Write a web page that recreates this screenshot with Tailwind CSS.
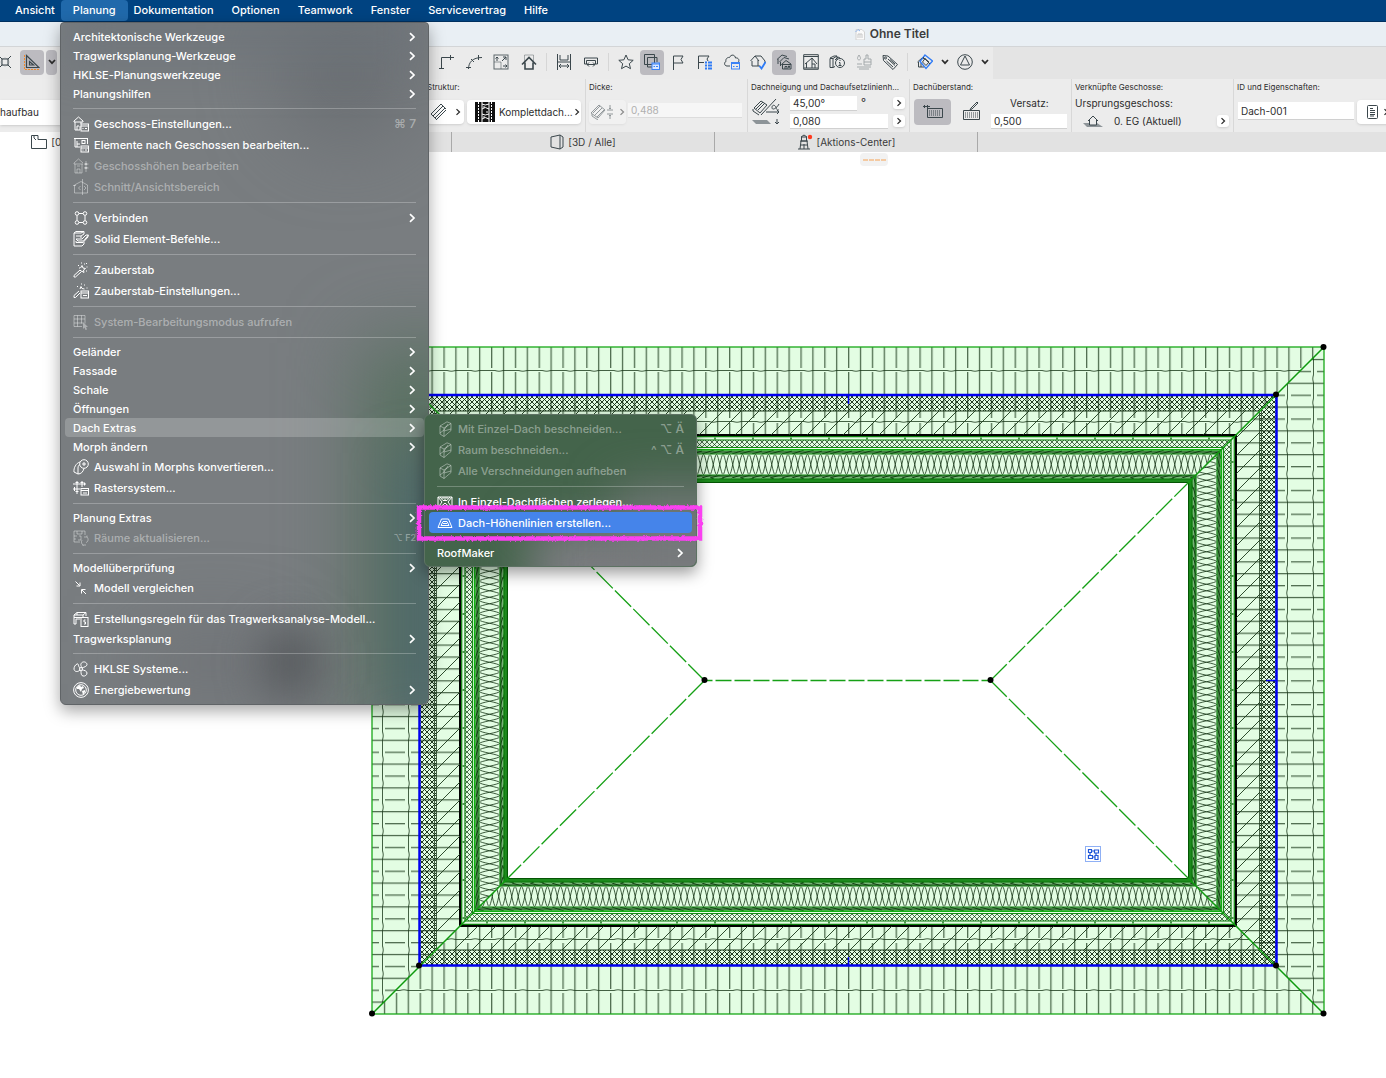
<!DOCTYPE html>
<html lang="de">
<head>
    <meta charset="UTF-8">
    <meta name="viewport" content="width=device-width, initial-scale=1.0">
    <title>Ohne Titel</title>
    <script src="https://cdn.jsdelivr.net/npm/@tailwindcss/browser@4"></script>
</head>
<body class="min-h-screen flex flex-col overflow-hidden bg-white font-['Inter','Liberation_Sans',sans-serif] text-[#2d2d2d]">

<!-- icon sprite -->
<svg class="hidden">
    <symbol id="chev" viewBox="0 0 8 10"><path d="M2 1.2 6 5 2 8.8" fill="none" stroke="currentColor" stroke-width="1.7"/></symbol>
    <symbol id="down" viewBox="0 0 10 8"><path d="M2 2 5 5.2 8 2" fill="none" stroke="currentColor" stroke-width="1.7"/></symbol>

    <!-- menu icons -->
    <symbol id="m-geschoss" viewBox="0 0 16 16"><path d="M1 5 5.500 1 10 5M1 5v1h9V5M2 6v8h5V10M4 14v-4h2M8 6v2" /><rect x="8" y="8" width="7.500" height="7"/><path d="M8 10h7M9.500 12.500h1M12 12.500h2"/></symbol>
    <symbol id="m-elemente" viewBox="0 0 16 16"><path d="M1 1.500h14M2 2v8h5M4 4v6M4 7h3M14.500 2v5"/><rect x="9" y="3.500" width="3" height="3"/><rect x="8" y="9" width="7.500" height="6"/><path d="M8 11h7M9.500 13h1M12 13h2"/></symbol>
    <symbol id="m-hoehen" viewBox="0 0 16 16"><path d="M1 5 5.500 1 10 5M1 5v1h9M2 6v9h7V6M4 15v-4h3v4M4 8h3M13 3v11M11 6h4.500M11 10h4.500M13 5l-1 1.500h2zM13 11l-1-1.500h2z"/></symbol>
    <symbol id="m-schnitt" viewBox="0 0 16 16"><path d="M1.500 14V6L8 2.500 14.500 6v8zM9.500 0v16M0 6.500h3M7.500 7l-2 2 2 2M11 7l2 2-2 2"/></symbol>
    <symbol id="m-verbinden" viewBox="0 0 16 16"><circle cx="4" cy="3.500" r="1.800"/><circle cx="12" cy="3.500" r="1.800"/><circle cx="4" cy="12.500" r="1.800"/><circle cx="12" cy="12.500" r="1.800"/><path d="M6 3.500h4M6 12.500h4M4 5.500v5M12 5.500v5"/></symbol>
    <symbol id="m-solid" viewBox="0 0 16 16"><path d="M1 2h7l3-1.500M1 2v13h8l2-2v-2M1 2l2-1.500h8V3M3 8h6l4-4h2.500l-5 6H5zM3 10v1.500h7l5-5.500V4M3 5h5l3-2M8 5v2"/></symbol>
    <symbol id="m-stab" viewBox="0 0 16 16"><path d="M1 13.500 7 8l1.500 1.500-6 5.500H1zM9 3.500l1 2.500 2.500.5-2 1.500.5 2.500-2.500-1.500M9 3.500 7.500 6"/><path d="M5 3.500h1M8 1h1M11 2h1M13.500 5h1M13 9h1M6 6h1M13 1.500h1"/></symbol>
    <symbol id="m-stabset" viewBox="0 0 16 16"><path d="M1 12.500 6 8M1 12.500v2h1.500L7 10M8 3.500l1 2 2.500.5M8 3.500 7 6M4 3.500h1M8 1h1M11 2h1M13.500 5h1"/><rect x="8" y="8" width="7.500" height="7"/><path d="M8 10h7M10 12.500h4"/></symbol>
    <symbol id="m-system" viewBox="0 0 16 16"><path d="M1 1.500h11v8M1 1.500v11h8M1 5h11M1 9h9M4.500 1.500v11M8.500 1.500v8"/><path d="m10 8 5 5h-2l1 2.500-1.500.5-1-2.500L10 15z" fill="currentColor" stroke="none"/></symbol>
    <symbol id="m-morph" viewBox="0 0 16 16"><circle cx="11" cy="5" r="4.300"/><path d="M11 3v4M9 5h4M7 3C3 4 .5 9 1 13l4 2V9c0-2 1-3 2-3.500M5 15c3 0 5-2 6-5.500"/></symbol>
    <symbol id="m-raster" viewBox="0 0 16 16"><path d="M4 1v13M9 1v6M0 4h13M0 9h7M2.500 2.500h3M7.500 2.500h3M2.500 11.500h3M1.500 7v4M11.500 2.500v3"/><rect x="8" y="8.500" width="7.500" height="6.500"/><path d="M8 10.500h7M10 13h4"/></symbol>
    <symbol id="m-raeume" viewBox="0 0 16 16"><path d="M7 12H1V1h11v4M4 1v3h5V1M1 6h3M1 9h2M6 6h2v4H5M14 7h-3M14 7c2 2 1 5-1 5.500M14 7v-1.500M10 15h3M10 15c-1.500-1-2-3-1-5M10 15v1"/></symbol>
    <symbol id="m-vergleich" viewBox="0 0 16 16"><path d="m2.500 1.500 4 4M7 2.500V6H3.500M13 14l-4-4M8.500 13.500V9.500h4" /></symbol>
    <symbol id="m-regeln" viewBox="0 0 16 16"><path d="M1 4h9v2M1 4l3-2.500h9V5M1 4v9h2V8h4M1 6.500h7M4 1.500v2.500M10 4l3-2.500"/><rect x="8" y="6.500" width="7" height="9"/><path d="M12.500 9h-1.500v2h1.500v2H11"/></symbol>
    <symbol id="m-hklse" viewBox="0 0 16 16"><circle cx="8" cy="8" r="1.500"/><path d="M7 7C5 6 6 2 4 3S1 6 1 8s3 4 6 1M9 7c-1-2-2-4 0-5.500s5 0 5 2S11 6 9 7M8 9.500c0 3 0 5 2 5.500s4-1 4-3-3-3-5-3"/></symbol>
    <symbol id="m-energie" viewBox="0 0 16 16"><circle cx="8" cy="8" r="7.400"/><circle cx="8" cy="8" r="5.300"/><path d="M4 5l3-2 1 2 2-1 1 2-2 1-1 3-2-3-2 0zM9 9l3-1v2l-2 3z" fill="currentColor" stroke="none"/></symbol>
    <symbol id="m-cut" viewBox="0 0 16 16"><path d="M3 5 10 .8l4 1.700v7L7 15.500 3 13zM3 5l4 2 7-4.500M7 7v8.500M3 12l4-3 4-6M7 10l7-2"/></symbol>
    <symbol id="m-zerlegen" viewBox="0 0 16 16"><path d="M1 3h14v10.500H1zM1 3l4 5-4 5.500M15 3l-4 5 4 5.500M3 3l3 3.500h4L13 3M6 3v2M8 3v3M10 3v2M3 13.500 8 9l5 4.500"/></symbol>
    <symbol id="m-linien" viewBox="0 0 16 16"><path d="M4.500 4h7L15 12.500H1zM4 10.500 6 6.500h4l2 4zM6 8.500h4"/></symbol>
</svg>

<!-- system menu bar -->
<nav class="h-[22px] shrink-0 flex items-center bg-[#004381] pl-[6px] text-[11px] font-medium text-white whitespace-nowrap border-b border-[#00305f]">
    <button class="h-full px-[9px]">Ansicht</button>
    <button class="h-full px-3 -mx-[3px] rounded bg-[#2069ab]">Planung</button>
    <button class="h-full px-[9px]">Dokumentation</button>
    <button class="h-full px-[9px]">Optionen</button>
    <button class="h-full px-[9px]">Teamwork</button>
    <button class="h-full px-[9px]">Fenster</button>
    <button class="h-full px-[9px]">Servicevertrag</button>
    <button class="h-full px-[9px]">Hilfe</button>
</nav>

<!-- window title -->
<header class="h-[25px] shrink-0 flex items-center justify-center gap-1 pl-[397px] bg-[#e9eff4] border-b border-[#d3d5d7] text-[12px] font-semibold text-[#3c3c3c]">
    <svg class="w-3 h-3" viewBox="0 0 12 12"><path d="M2 1.500h6l2.500 2.500v8H2z" fill="#fafafa" stroke="#d2d2d2"/><path d="M1.500 4 4 1.500 6 3" fill="none" stroke="#8fb4ec"/><path d="M4 10V6h4v4M6 6v4" fill="none" stroke="#c8c8c8"/></svg>
    <h1>Ohne Titel</h1>
</header>

<!-- toolbar -->
<div class="h-8 shrink-0 bg-[#e4e4e4]">
    <div class="h-full w-[993px] pb-[2px] flex items-center bg-[#ebebeb] [&_svg]:fill-none [&_svg]:stroke-[#3b474c]">
        <div class="w-[434px] flex items-center gap-[2px] shrink-0">
            <button aria-label="Raster" class="-ml-1 mr-[6px] w-4 h-6 flex items-center"><svg class="w-4 h-4" viewBox="0 0 16 16"><path d="M6 5h6v6H6zM6 5 3 2M12 5l3-3M6 11l-3 3M12 11l3 3"/><circle cx="9" cy="8" r="4" stroke-opacity=".3"/></svg></button>
            <button aria-label="Hilfslinien" class="w-6 h-[25px] rounded bg-[#bcbbc0] flex items-center justify-center"><svg class="w-4 h-4" viewBox="0 0 16 16"><path d="M2.500 1.500V13.500h12.500zM5.500 7.500v3.500h4z" stroke-width="1.200"/><path d="M.5 1v14.500H15" style="stroke:#f08a2c" stroke-dasharray="2 1"/></svg></button>
            <button aria-label="Hilfslinien Optionen" class="w-[11px] h-[25px] rounded bg-[#bcbbc0] flex items-center justify-center"><svg class="w-[10px] h-2 shrink-0"><use href="#down"/></svg></button>
        </div>
        <div class="w-[107px] flex justify-between shrink-0">
            <button aria-label="Ecke" class="w-6 h-6 flex items-center justify-center"><svg class="w-4 h-4" viewBox="0 0 16 16"><path d="M3.500 15V3.500H16M1 14.500h5M12.500 1v5"/></svg></button>
            <button aria-label="Bogen" class="w-6 h-6 flex items-center justify-center"><svg class="w-4 h-4" viewBox="0 0 16 16"><path d="M2.500 15C2.500 8 7 3.500 16 3.500M0 13.500h5M12.500 1v5M5 5l3 3"/></svg></button>
            <button aria-label="Skalieren" class="w-6 h-6 flex items-center justify-center"><svg class="w-4 h-4" viewBox="0 0 16 16"><rect x="1" y="1" width="14" height="14" stroke-opacity=".8"/><path d="M1 8h7v7" stroke-opacity=".5"/><path d="M4 3v4M2.500 4.500 4 3l1.500 1.500M10 12h4M12.500 10.500 14 12l-1.500 1.500M9 7l4-4M10 3h3v3"/></svg></button>
            <button aria-label="Haus" class="w-6 h-6 flex items-center justify-center"><svg class="w-4 h-4" viewBox="0 0 16 16"><path d="M3.500 8V1h9v7" stroke-opacity=".4"/><path d="M1 10.500 8 3.500l7 7M4 8.500V15h8V8.500" stroke-width="1.600"/></svg></button>
        </div>
        <div class="w-px h-[18px] mx-[5px] bg-[#d6d6d6]"></div>
        <div class="w-[51px] flex justify-between shrink-0">
            <button aria-label="Bemaßung" class="w-6 h-6 flex items-center justify-center"><svg class="w-4 h-4" viewBox="0 0 16 16"><path d="M1.500 0v16M14.500 0v16M4 1v5h8V1M1.500 8h13M3 12h10M5 10l-2 2 2 2M11 10l2 2-2 2"/></svg></button>
            <button aria-label="Abstand" class="w-6 h-6 flex items-center justify-center"><svg class="w-4 h-4" viewBox="0 0 16 16"><path d="M1.500 4h13v6h-2V6.500h-9V10h-2zM4 10.500h8M6 8.500l-2 2 2 2M10 8.500l2 2-2 2"/></svg></button>
        </div>
        <div class="w-px h-[18px] mx-[5px] bg-[#d6d6d6]"></div>
        <div class="w-[288px] flex justify-between shrink-0">
            <button aria-label="Favoriten" class="w-6 h-[25px] flex items-center justify-center"><svg class="w-4 h-4" viewBox="0 0 16 16"><path d="m8 1 2.100 4.800 5.100.5-3.900 3.400 1.200 5L8 12.100l-4.500 2.600 1.200-5L.8 6.300l5.100-.5z"/></svg></button>
            <button aria-label="Ebenen" class="w-6 h-[25px] rounded bg-[#bcbbc0] flex items-center justify-center"><svg class="w-4 h-4" viewBox="0 0 16 16"><path d="M.5.500h10v10H.5zM3.500 3.500H13V8M3.500 3.500V13H8"/><g style="stroke:#3b82f6"><rect x="8" y="9" width="7.500" height="6.500" fill="#dbe8ff"/><path d="M8 10h7.500M9.500 12.500h1.500M12 12.500h2"/></g></svg></button>
            <button aria-label="Marker" class="w-6 h-[25px] flex items-center justify-center"><svg class="w-4 h-4" viewBox="0 0 16 16"><path d="M2.500 16V2H12l-2 3.500L12 9H2.500"/></svg></button>
            <button aria-label="Marker-Liste" class="w-6 h-[25px] flex items-center justify-center"><svg class="w-4 h-4" viewBox="0 0 16 16"><path d="M1.500 15V2H12L10 5l1 2M1.500 8.500H7"/><path d="M8 8.500h2M11 8.500h4M8 11.500h2M11 11.500h4M8 14.500h2M11 14.500h4" style="stroke:#2f7bf6" stroke-width="2"/></svg></button>
            <button aria-label="Wolke" class="w-6 h-[25px] flex items-center justify-center"><svg class="w-4 h-4" viewBox="0 0 16 16"><path d="M6 12H3C0 12 0 8 2 7.500 1 4 5 3 5.500 3.500 7 0 11 .5 11.500 4c3-.5 4 2 3 4"/><g style="stroke:#3b82f6"><rect x="7.500" y="8.500" width="8" height="6.500"/><path d="M7.500 9.500h8M9 12.500h1.500M12 12.500h2"/></g></svg></button>
            <button aria-label="Prüfen" class="w-6 h-[25px] flex items-center justify-center"><svg class="w-4 h-4" viewBox="0 0 16 16"><path d="M.5 7 5 2l4 5M5 2h6l4 5v2M2 7v5h6V6M8 12h2"/><path d="m9.500 12 2 2.500L15.500 8" style="stroke:#2f7bf6" stroke-width="1.800"/></svg></button>
            <button aria-label="Geschosse" class="w-6 h-[25px] rounded bg-[#bcbbc0] flex items-center justify-center"><svg class="w-4 h-4" viewBox="0 0 16 16"><path d="M1 5.500 6 1l5 1.500M2 5v5M3.500 8 8 3.500 13 5M4.500 8v4M5.500 10.500 10 6.500l5 3.500v5H6.500v-5M5.500 10.500H15M9 15v-2.500h2V15M12.500 12h1v1.500h-1z"/></svg></button>
            <button aria-label="Ausschnitt" class="w-6 h-[25px] flex items-center justify-center"><svg class="w-4 h-4" viewBox="0 0 16 16"><path d="M.7.700h14.600v14.600H.7zM.7 2.500h14.600M2 10l7-6 5 6M3.500 9v5M9 4v10M9 10h3v4M1 14h14"/></svg></button>
            <button aria-label="Info" class="w-6 h-[25px] flex items-center justify-center"><svg class="w-4 h-4" viewBox="0 0 16 16"><path d="M1 4 5 2h3L4 4.500H1v9h3v-9M8 2v4M4 13.500 6 12.500"/><path d="M6 6 9 3l2 1"/><circle cx="11" cy="9" r="4.500"/><path d="M11 6v1M10 8.500h1v3M9.500 11.500h3"/></svg></button>
            <button aria-label="Farbe" class="w-6 h-[25px] flex items-center justify-center opacity-40"><svg class="w-4 h-4" viewBox="0 0 16 16"><path d="M3 1C1 4 1 5.500 3 6c2-.5 2-2 0-5zM8 7V5h2V1h2v4h3v6H8zM8 8h7M1 10h5M1 13h14M3 15h10"/></svg></button>
            <button aria-label="Etikett" class="w-6 h-[25px] flex items-center justify-center"><svg class="w-4 h-4" viewBox="0 0 16 16"><path d="M1 1.500 6 2l9.500 8.500-4.500 5L1.500 6.500zM6 5l7 6.500M4.500 7l6.500 6M8 5.500l5 4.500"/><circle cx="3.500" cy="4" r="1"/></svg></button>
        </div>
        <div class="w-px h-[18px] mx-[5px] bg-[#d6d6d6]"></div>
        <div class="flex items-center shrink-0">
            <button aria-label="Ansicht" class="w-6 h-6 flex items-center justify-center"><svg class="w-4 h-4" viewBox="0 0 16 16"><path d="M.5 8 5 4l3 1M1.500 8v5H7M4 13V9"/><path d="m8 1 7.500 6L9 14.500 3 7.500z" style="stroke:#2f7bf6" stroke-width="1.300"/><path d="m8 4.500 4 3.500-3 3.500L5.500 8zM6 3l7 7"/></svg></button>
            <button aria-label="Ansicht Optionen" class="w-4 h-6 flex items-center justify-center"><svg class="w-[10px] h-2"><use href="#down"/></svg></button>
            <button aria-label="Nordpfeil" class="w-6 h-6 flex items-center justify-center"><svg class="w-4 h-4" viewBox="0 0 16 16"><circle cx="8" cy="8" r="7.300"/><path d="m8 2 4.500 9h-9z"/></svg></button>
            <button aria-label="Nordpfeil Optionen" class="w-4 h-6 flex items-center justify-center"><svg class="w-[10px] h-2"><use href="#down"/></svg></button>
        </div>
    </div>
</div>

<!-- info box -->
<section class="h-[53px] shrink-0 flex bg-[#ececec] text-[11px] whitespace-nowrap overflow-hidden">
    <div class="w-[423px] shrink-0 pt-[21px]">
        <div class="h-[25px] bg-white shadow-sm flex items-center text-[10px]">haufbau</div>
    </div>
    <div class="w-[162px] shrink-0 pl-1">
        <p class="h-4 leading-4 text-[8px]">Struktur:</p>
        <div class="flex gap-[3px] pt-[5px]">
            <button aria-label="Struktur" class="w-[37px] h-6 rounded bg-white shadow-sm flex items-center justify-center gap-2"><svg class="w-4 h-4 fill-none stroke-[#3b474c]" viewBox="0 0 16 16"><path d="M0 10 10 0M2 12 12 2M4 14 14 4M6 15l9-9M0 10l6 6M10 0l5 5"/></svg><svg class="w-[6px] h-2"><use href="#chev"/></svg></button>
            <button class="w-[114px] h-6 rounded bg-white shadow-sm flex items-center gap-1 pl-2 text-[10px]"><svg class="w-[20px] h-5 shrink-0" viewBox="0 0 20 20"><path d="M0 0h20v20H0z" fill="#111"/><path d="M3.500 0v20M16.500 0v20" stroke="#fff" stroke-dasharray="2 1"/><path d="M7 0v20M14 0v20" stroke="#fff"/><path d="M7 2q3 2 7 0M7 7q3-3 7 0M7 12q3 2 7 0M7 17q3-3 7 0M9 4v2M12 9v2M9 14v2" stroke="#fff" fill="none"/></svg>Komplettdach...<svg class="w-[6px] h-2 shrink-0 -ml-[3px]"><use href="#chev"/></svg></button>
        </div>
    </div>
    <div class="w-[162px] shrink-0 border-l border-[#d8d8d8] pl-[3px]">
        <label for="dicke" class="block h-4 leading-4 text-[8px]">Dicke:</label>
        <div class="flex gap-[2px] pt-[5px]">
            <button aria-label="Dicke" disabled class="w-[37px] h-6 rounded bg-white/50 shadow-sm flex items-center justify-center gap-1 opacity-50"><svg class="w-6 h-4 fill-none stroke-[#3b474c]" viewBox="0 0 24 16"><path d="M0 9 8 1l6 5-7 8zM2 9l7-7M4 11l7-7M6 13l7-7M1 10v2l6 4M16 6h6M16 10h6M19 1v4M19 11v4M18 4l1 1 1-1M18 12l1-1 1 1"/></svg><svg class="w-[6px] h-2"><use href="#chev"/></svg></button>
            <input id="dicke" disabled value="0,488" class="mt-[3px] w-[114px] h-[15px] bg-[#f6f6f6] border-b border-[#dcdcdc] px-[3px] text-[10px] text-[#b0b0b0]">
        </div>
    </div>
    <div class="w-[162px] shrink-0 border-l border-[#d8d8d8] pl-[3px]">
        <p class="h-4 leading-4 text-[8px]">Dachneigung und Dachaufsetzlinienh...</p>
        <div class="flex pt-px">
            <svg class="w-7 h-7 mt-[2px] mr-[10px] ml-px fill-none stroke-[#3b474c]" viewBox="0 0 28 28"><path d="M2 10 9 3l6 4-7 8zM4 11l7-7M6 12l7-7M1 11v2l6 4M9 17 24 1M14 14h13M25 12l2 2-2 2M20 9.500c0-3 3-3 4 0s2 3 3 2M27 6c-2 4-7 7-7 3.500M25 21v5M23 24l2 2 2-2"/><path d="M0 22h15l4 4H4z" fill="#8d9498" stroke="none"/></svg>
            <div class="w-[98px] flex flex-col gap-[3px]">
                <div class="flex"><input aria-label="Dachneigung" value="45,00°" class="w-[67px] h-[15px] bg-white px-[3px] border-b border-[#d0d0d0] text-[10px]"><span class="pl-1 leading-3">°</span></div>
                <input aria-label="Dachaufsetzlinienhöhe" value="0,080" class="w-full h-[15px] bg-white px-[3px] border-b border-[#d0d0d0] text-[10px]">
            </div>
            <div class="flex flex-col gap-[6px] pl-[5px] pt-px">
                <button aria-label="Neigung" class="w-3 h-3 rounded-[3px] bg-white shadow-sm flex items-center justify-center"><svg class="w-[6px] h-2"><use href="#chev"/></svg></button>
                <button aria-label="Höhe" class="w-3 h-3 rounded-[3px] bg-white shadow-sm flex items-center justify-center"><svg class="w-[6px] h-2"><use href="#chev"/></svg></button>
            </div>
        </div>
    </div>
    <div class="w-[162px] shrink-0 border-l border-[#d8d8d8] pl-[3px]">
        <p class="h-4 leading-4 text-[8px]">Dachüberstand:</p>
        <div class="flex">
            <button aria-label="Überstand rechtwinklig" class="mt-1 ml-px w-[37px] h-[26px] rounded bg-[#bcbbc0] flex items-center justify-center"><svg class="w-5 h-4 fill-none stroke-[#3b474c]" viewBox="0 0 20 16"><path d="M4 4.500h15.500v9H4.500V1M0 2.500h7M1.500 1v3"/><path d="M6 7h12M6 9h12M6 11h12" stroke-dasharray="1 1"/></svg></button>
            <button aria-label="Überstand frei" class="mt-[6px] ml-[10px] w-5 h-5"><svg class="w-5 h-5 fill-none stroke-[#3b474c]" viewBox="0 0 20 20"><path d="M2.500 9.500h16v9h-16z"/><path d="M4 12h13M4 14h13M4 16h13" stroke-dasharray="1 1"/><path d="m9 9 1-2 6-6 1 1-6 6z"/></svg></button>
            <div class="pl-[9px] w-[86px] flex flex-col items-end">
                <label for="versatz" class="h-[19px] leading-4 text-[10px] w-[57px]">Versatz:</label>
                <input id="versatz" value="0,500" class="w-[76px] h-[15px] bg-white px-[3px] border-b border-[#d0d0d0] text-[10px]">
            </div>
        </div>
    </div>
    <div class="w-[162px] shrink-0 border-l border-[#d8d8d8] pl-[3px]">
        <p class="h-4 leading-4 text-[8px]">Verknüpfte Geschosse:</p>
        <p class="leading-4 text-[10px]">Ursprungsgeschoss:</p>
        <div class="flex items-center h-5 text-[10px] pl-2">
            <svg class="w-5 h-3" viewBox="0 0 20 12"><path d="M0 8h14l6 4H4z" fill="#8d9498"/><path d="M5 6 10 1l5 5M6.500 5v5h7V5" fill="#ececec" stroke="#3b474c"/></svg>
            <span class="pl-[11px]">0. EG (Aktuell)</span>
            <button aria-label="Geschoss wählen" class="ml-auto mr-1 w-3 h-3 rounded-[3px] bg-white shadow-sm flex items-center justify-center"><svg class="w-[6px] h-2"><use href="#chev"/></svg></button>
        </div>
    </div>
    <div class="w-[162px] shrink-0 border-l border-[#d8d8d8] pl-[3px]">
        <label for="elementId" class="block h-4 leading-4 text-[8px]">ID und Eigenschaften:</label>
        <div class="flex gap-[3px] pt-[5px]">
            <input id="elementId" value="Dach-001" class="mt-[2px] ml-px w-[116px] h-[18px] shrink-0 bg-white px-[3px] border-b border-[#d0d0d0] text-[10px]">
            <button aria-label="Eigenschaften" class="w-10 h-6 shrink-0 rounded bg-white shadow-sm flex items-center gap-1 pl-[10px]"><svg class="w-3 h-[14px] fill-none stroke-[#3b474c]" viewBox="0 0 12 14"><rect x=".5" y=".5" width="10" height="13" rx="1"/><path d="M3 3.500h3M3 5.500h5M3 7.500h5M3 9.500h5M3 11h4"/></svg><svg class="w-[6px] h-2"><use href="#chev"/></svg></button>
        </div>
    </div>
</section>

<!-- view tabs -->
<div class="h-5 shrink-0 flex bg-[#e2e2e2] text-[10px] text-[#3a3a3a] overflow-hidden">
    <button class="-ml-[74px] w-[263px] shrink-0 bg-white flex items-center justify-center gap-1"><svg class="w-4 h-4 fill-none stroke-[#3b474c]" viewBox="0 0 16 16"><path d="M.5 1.500h6.500v4h8.500v9H.5zM3 2v2l2 2"/></svg>[0. EG]</button>
    <button aria-label="Schnitt" class="w-[263px] shrink-0 border-r border-[#a9a9a9]"></button>
    <button class="w-[263px] shrink-0 border-r border-[#a9a9a9] flex items-center justify-center gap-1"><svg class="w-[14px] h-4 fill-none stroke-[#3b474c]" viewBox="0 0 14 16"><path d="M1 3 10 1l3 2v10l-3 2-9-2zM10 1v14"/></svg>[3D / Alle]</button>
    <button class="w-[263px] shrink-0 border-r border-[#a9a9a9] flex items-center justify-center gap-1"><svg class="w-4 h-4 fill-none stroke-[#3b474c]" viewBox="0 0 16 16"><path d="M1 15h12M3 15l1-8h6l1 8M3 7h8M4.500 7V3h5v4M4 3l3-2 3 2M7 10v5M4 11h6"/><circle cx="13" cy="3" r="2.200" fill="#ff3b1f" stroke="none"/></svg>[Aktions-Center]</button>
</div>

<!-- drawing area -->
<main class="relative flex-1 min-h-[926px] bg-white">
    <div class="absolute left-[860px] top-px w-7 h-[13px] rounded-sm bg-[#f2f2f2] flex items-center justify-center"><svg class="w-6 h-1" viewBox="0 0 24 4"><path d="M1 2h23" stroke="#f5bd88" stroke-width="1.500" stroke-dasharray="5 1"/></svg></div>

    <svg class="absolute left-[366px] top-[189px] w-[964px] h-[679px]" viewBox="366 341 964 679">
        <defs>
            <!-- all patterns run along x, with y as the depth from the eaves -->
            <pattern id="tile" width="23.800" height="136" patternUnits="userSpaceOnUse">
                <g stroke="#1c3a1c" fill="none"><path d="M12.500 0v136" stroke-opacity=".75" stroke-width="1.300"/><path d="M.7 0v21M.7 25v46M.7 76v20" stroke-width="1.200" stroke-opacity=".8"/><path d="M0 23.500h4q4 1.500 8 0h12M0 74.500h4q4 1.500 8 0h12" stroke-opacity=".8"/></g>
            </pattern>
            <pattern id="tileSide" width="23.800" height="136" patternUnits="userSpaceOnUse">
                <g stroke="#1c3a1c" fill="none"><path d="M12.500 0v136" stroke-width="1.200" stroke-opacity=".8"/><path d="M.7 0v7M.7 13v20M.7 39v9M.7 48v88" stroke-opacity=".8" stroke-width="1.200"/><path d="M0 10.500h4q4 1.500 8 0h12M0 36.500h4q4 1.500 8 0h12" stroke-opacity=".8"/></g>
            </pattern>
            <pattern id="cross" width="5" height="5" patternUnits="userSpaceOnUse"><path d="M-1-1l7 7M6-1-1 6" stroke="#0c260c" stroke-width=".9"/></pattern>
            <pattern id="fine" width="5" height="5" patternUnits="userSpaceOnUse"><path d="M-1-1l7 7M6-1-1 6" stroke="#0a300a" stroke-width=".7"/></pattern>
            <pattern id="diagUp" width="18" height="18" patternUnits="userSpaceOnUse"><path d="M-1 19 19-1" stroke="#1c3a1c" stroke-opacity=".9"/></pattern>
            <pattern id="wool" width="13" height="21" y="107" patternUnits="userSpaceOnUse"><path d="M0 20.500C2 20.500 4.500.5 6.500.5S11 20.500 13 20.500M0 .5C2 .5 4.500 20.500 6.500 20.500S11 .5 13 .5" fill="none" stroke="#103010" stroke-width=".8"/></pattern>
            <pattern id="wood" width="30" height="4" y="103" patternUnits="userSpaceOnUse"><path d="M0 4 12 0M8 4 22 0M20 4 30 1M0 2h30" stroke="#0a3a0a" stroke-width=".9"/></pattern>

            <g id="layers">
                <rect y="88" width="952" height="48" fill="#e3fde3"/>
                <rect y="93" width="952" height="7" fill="url(#fine)"/>
                <rect y="107" width="952" height="21" fill="url(#wool)"/>
                <rect y="103" width="952" height="4" fill="#74b574"/>
                <rect y="103" width="952" height="4" fill="url(#wood)"/>
                <rect y="128" width="952" height="4" fill="#74b574"/>
                <rect y="128" width="952" height="4" fill="url(#wood)"/>
                <rect y="132" width="952" height="4" fill="#1d8a1d"/>
                <g stroke-width="1.200">
                    <path d="M0 88h952" stroke="#000" stroke-width="2"/>
                    <path d="M0 89.700h952M0 93h952" stroke="#0b7d0b"/>
                    <path d="M0 100.500h952" stroke="#128c12"/>
                    <path d="M0 102.700h952" stroke="#10b010" stroke-width="1.500"/>
                    <path d="M0 107h952M0 128h952M0 132h952" stroke="#0a780a"/>
                    <path d="M0 135.500h952" stroke="#045504"/>
                    <path d="M0 91.500h952" stroke="#0b6a0b" stroke-width="2" stroke-dasharray="2 36" stroke-opacity=".7"/>
                </g>
            </g>
            <clipPath id="clipH"><path d="M0 0h952L816 136H136z"/></clipPath>
            <clipPath id="clipV"><path d="M0 0h667L531 136H136z"/></clipPath>
            <g id="sideH" clip-path="url(#clipH)">
                <rect width="952" height="136" fill="#e3fde3"/>
                <rect width="952" height="88" fill="url(#tile)"/>
                <rect y="48" width="952" height="16" fill="url(#cross)"/>
                <path d="M0 64h952" stroke="#1c3a1c"/>
                <use href="#layers"/>
            </g>
            <g id="sideV" clip-path="url(#clipV)">
                <rect width="952" height="136" fill="#e3fde3"/>
                <rect width="952" height="88" fill="url(#tileSide)"/>
                <rect y="48" width="952" height="16" fill="url(#cross)"/>
                <path d="M0 62.500h952M0 64.500h952" stroke="#1c3a1c" stroke-opacity=".8"/>
                <use href="#layers"/>
            </g>
        </defs>

        <use href="#sideH" transform="translate(372 347)"/>
        <use href="#sideH" transform="matrix(1 0 0 -1 372 1014)"/>
        <use href="#sideV" transform="matrix(0 1 1 0 372 347)"/>
        <use href="#sideV" transform="matrix(0 1 -1 0 1324 347)"/>
        <path d="M436 411h824v539H436zM460 435v491h776V435z" fill="url(#diagUp)" fill-rule="evenodd"/>

        <rect x="372" y="347" width="952" height="667" fill="none" stroke="#17a817" stroke-width="1.300"/>
        <rect x="419.500" y="395" width="857" height="570.500" fill="none" stroke="#0000f0" stroke-width="2.500"/>
        <path d="M848.500 395v9M848.500 957v9M1266 680.500h10" stroke="#0000f0" stroke-width="1.500"/>
        <path d="M372 347 508 483M1324 347 1188 483M372 1014 508 878M1324 1014 1188 878" stroke="#0e9a0e" stroke-width="1.500"/>
        <path d="M704.500 680.500 508 483M990.500 680.500 1188 483M704.500 680.500 508 878M990.500 680.500 1188 878" stroke="#16a016" stroke-width="1.300" stroke-dasharray="23 3"/>
        <path d="M704.500 680.500h286" stroke="#16a016" stroke-width="1.300" stroke-dasharray="16 3" stroke-dashoffset="8"/>
        <g fill="#000">
            <circle cx="704.500" cy="680" r="3"/><circle cx="990.500" cy="680" r="3"/>
            <circle cx="1323.500" cy="347" r="3"/><circle cx="1276" cy="394.500" r="3"/>
            <circle cx="419" cy="965.500" r="3"/><circle cx="1276" cy="965.500" r="3"/>
            <circle cx="372" cy="1013.500" r="3"/><circle cx="1323.500" cy="1013.500" r="3"/>
        </g>
        <g fill="none" stroke="#1f56d8">
            <rect x="1085.500" y="846.500" width="15" height="15" stroke="#8fb0f5"/>
            <path d="M1088.500 849.500h3v3h-3zM1094.500 850h4v3h-4zM1088.500 855.500h4v3h-4zM1095 855.500h3v4h-3zM1092 851h2M1096 853v2M1090 853v2M1093 857h2" stroke-width="1.200"/>
        </g>
    </svg>
</main>

<!-- dropdown "Planung" -->
<div class="absolute left-[60px] top-[22px] w-[369px] rounded-md rounded-t-sm bg-[#797d80] text-white shadow-[0_6px_16px_rgba(0,0,0,0.35)] border border-[#606467]">
    <div class="absolute inset-0 overflow-hidden rounded-md">
        <div class="absolute left-[220px] top-[-20px] w-[130px] h-[140px] rounded-full bg-[#64686c]/70 blur-2xl"></div>
        <div class="absolute left-0 top-[-20px] w-full h-[60px] bg-[#6b7278]/60 blur-xl"></div>
        <div class="absolute right-[-40px] top-[320px] w-[105px] h-[390px] bg-[#4c6c55]/80 blur-2xl"></div>
        <div class="absolute right-[-30px] top-[430px] w-[65px] h-[280px] bg-[#4a666e]/70 blur-xl"></div>
        <div class="absolute left-[80px] top-[610px] w-[140px] h-[60px] bg-[#65696c]/60 blur-2xl"></div>
        <div class="absolute left-[205px] top-[605px] w-[50px] h-[70px] rounded-full bg-[#46494c]/80 blur-xl"></div>
    </div>
    <div id="planungMenu" class="relative py-1 px-1"></div>
</div>

<!-- submenu "Dach Extras" -->
<div class="absolute left-[424px] top-[414px] w-[273px] rounded-md bg-[#44644b] text-white shadow-[0_6px_16px_rgba(0,0,0,0.4)] border border-[#5d7263]">
    <div class="absolute inset-0 overflow-hidden rounded-md">
        <div class="absolute left-[105px] top-[110px] w-[220px] h-[90px] bg-[#7b7c80] blur-xl"></div>
        <div class="absolute left-[190px] top-[70px] w-[140px] h-[90px] bg-[#77797c]/80 blur-xl"></div>
    </div>
    <div id="dachMenu" class="relative pt-[3px] pb-1 px-1"></div>
</div>

<!-- marker frame -->
<svg class="absolute left-[412px] top-[500px] w-[296px] h-[46px]" viewBox="0 0 296 46">
    <filter id="rough"><feTurbulence type="fractalNoise" baseFrequency="0.4" numOctaves="2" seed="4"/><feDisplacementMap in="SourceGraphic" scale="3"/></filter>
    <rect x="7" y="7.500" width="281" height="31" fill="none" stroke="#fb3ff2" stroke-width="4.500" filter="url(#rough)"/>
</svg>

<script>
    const planung = [
        { text: 'Architektonische Werkzeuge', sub: true },
        { text: 'Tragwerksplanung-Werkzeuge', sub: true },
        { text: 'HKLSE-Planungswerkzeuge', sub: true },
        { text: 'Planungshilfen', sub: true },
        null,
        { text: 'Geschoss-Einstellungen...', icon: 'm-geschoss', key: '⌘ 7' },
        { text: 'Elemente nach Geschossen bearbeiten...', icon: 'm-elemente' },
        { text: 'Geschosshöhen bearbeiten', icon: 'm-hoehen', off: true },
        { text: 'Schnitt/Ansichtsbereich', icon: 'm-schnitt', off: true },
        null,
        { text: 'Verbinden', icon: 'm-verbinden', sub: true },
        { text: 'Solid Element-Befehle...', icon: 'm-solid' },
        null,
        { text: 'Zauberstab', icon: 'm-stab' },
        { text: 'Zauberstab-Einstellungen...', icon: 'm-stabset' },
        null,
        { text: 'System-Bearbeitungsmodus aufrufen', icon: 'm-system', off: true },
        null,
        { text: 'Geländer', sub: true },
        { text: 'Fassade', sub: true },
        { text: 'Schale', sub: true },
        { text: 'Öffnungen', sub: true },
        { text: 'Dach Extras', sub: true, open: true },
        { text: 'Morph ändern', sub: true },
        { text: 'Auswahl in Morphs konvertieren...', icon: 'm-morph' },
        { text: 'Rastersystem...', icon: 'm-raster' },
        null,
        { text: 'Planung Extras', sub: true },
        { text: 'Räume aktualisieren...', icon: 'm-raeume', off: true, key: '⌥ F2', smallKey: true },
        null,
        { text: 'Modellüberprüfung', sub: true },
        { text: 'Modell vergleichen', icon: 'm-vergleich' },
        null,
        { text: 'Erstellungsregeln für das Tragwerksanalyse-Modell...', icon: 'm-regeln' },
        { text: 'Tragwerksplanung', sub: true },
        null,
        { text: 'HKLSE Systeme...', icon: 'm-hklse' },
        { text: 'Energiebewertung', icon: 'm-energie', sub: true }
    ];

    const dach = [
        { text: 'Mit Einzel-Dach beschneiden...', icon: 'm-cut', off: true, key: '⌥ Ä' },
        { text: 'Raum beschneiden...', icon: 'm-cut', off: true, key: '^ ⌥ Ä' },
        { text: 'Alle Verschneidungen aufheben', icon: 'm-cut', off: true },
        null,
        { text: 'In Einzel-Dachflächen zerlegen...', icon: 'm-zerlegen' },
        { text: 'Dach-Höhenlinien erstellen...', icon: 'm-linien', active: true },
        null,
        { text: 'RoofMaker', sub: true }
    ];

    function renderMenu(id, items) {
        document.getElementById(id).innerHTML = items.map(item => {
            if (!item) {
                return '<div class="h-[10px] px-2 flex items-center"><div class="h-px w-full bg-white/25"></div></div>';
            }
            const height = item.icon ? 'h-[21px]' : 'h-[19px]';
            const state = item.open ? 'bg-white/20' : item.active ? 'bg-[#4584ea]' : '';
            const tone = item.off ? 'text-white/40' : '';
            const icon = item.icon ? `<svg class="w-4 h-4 mr-[5px] fill-none stroke-current"><use href="#${item.icon}"/></svg>` : '';
            const key = item.key ? `<span class="ml-auto text-white/40 ${item.smallKey ? 'text-[9px]' : 'text-[12px]'}">${item.key}</span>` : '';
            const arrow = item.sub ? '<svg class="ml-auto w-2 h-[10px]"><use href="#chev"/></svg>' : '';
            return `<button class="w-full ${height} px-2 rounded flex items-center text-[11px] font-medium whitespace-nowrap ${state} ${tone}">${icon}<span class="pt-px">${item.text}</span>${key}${arrow}</button>`;
        }).join('');
    }

    renderMenu('planungMenu', planung);
    renderMenu('dachMenu', dach);
</script>
</body>
</html>
